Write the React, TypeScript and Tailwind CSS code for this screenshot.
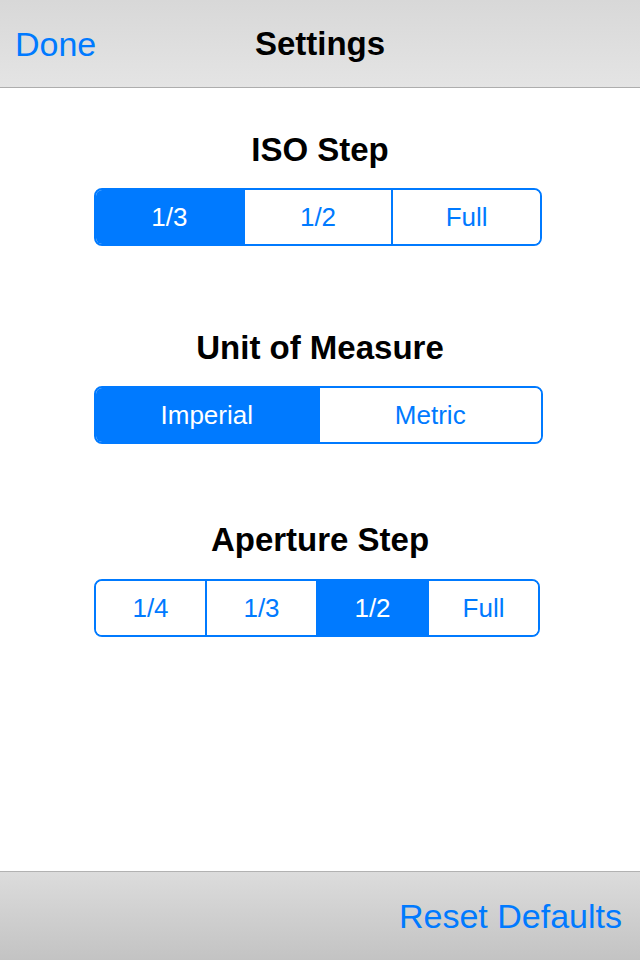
import React from "react";

function Segmented({
  items,
  selected,
  width,
}: {
  items: string[];
  selected: number;
  width: string;
}) {
  return (
    <div
      className={`ml-[94px] flex h-[58px] overflow-hidden rounded-[8px] border-2 border-[#007aff] ${width}`}
    >
      {items.map((it, i) => (
        <div
          key={it}
          className={`flex flex-1 items-center justify-center text-[26px] ${
            i > 0 ? "border-l-2 border-[#007aff]" : ""
          } ${i === selected ? "bg-[#007aff] text-white" : "bg-white text-[#007aff]"}`}
        >
          {it}
        </div>
      ))}
    </div>
  );
}

function Title({ children }: { children: React.ReactNode }) {
  return (
    <div className="text-center text-[33px] font-bold leading-[40px] text-black">
      {children}
    </div>
  );
}

export default function App() {
  return (
    <div
      className="flex h-[960px] w-[640px] flex-col bg-white"
      style={{ fontFamily: '"Liberation Sans", Arial, sans-serif' }}
    >
      <div className="relative flex h-[88px] shrink-0 items-center border-b border-[#adadad] bg-gradient-to-b from-[#d8d8d8] to-[#e4e4e4] pl-[15px]">
        <span className="text-[34px] leading-[40px] text-[#007aff]">Done</span>
        <span className="pointer-events-none absolute left-0 right-0 top-[24px] text-center text-[33px] font-semibold leading-[40px] text-black">
          Settings
        </span>
      </div>

      <div className="flex flex-1 flex-col pt-[42px]">
        <Title>ISO Step</Title>
        <div className="mt-[18px]">
          <Segmented items={["1/3", "1/2", "Full"]} selected={0} width="w-[448px]" />
        </div>

        <div className="mt-[82px]">
          <Title>Unit of Measure</Title>
        </div>
        <div className="mt-[18px]">
          <Segmented items={["Imperial", "Metric"]} selected={0} width="w-[449px]" />
        </div>

        <div className="mt-[76px]">
          <Title>Aperture Step</Title>
        </div>
        <div className="mt-[19px]">
          <Segmented items={["1/4", "1/3", "1/2", "Full"]} selected={2} width="w-[446px]" />
        </div>
      </div>

      <div className="flex h-[89px] shrink-0 items-center justify-end border-t border-[#b2b2b2] bg-gradient-to-b from-[#dcdcdc] to-[#c3c3c3] pr-[18px]">
        <span className="text-[34px] leading-[40px] text-[#007aff]">Reset Defaults</span>
      </div>
    </div>
  );
}
